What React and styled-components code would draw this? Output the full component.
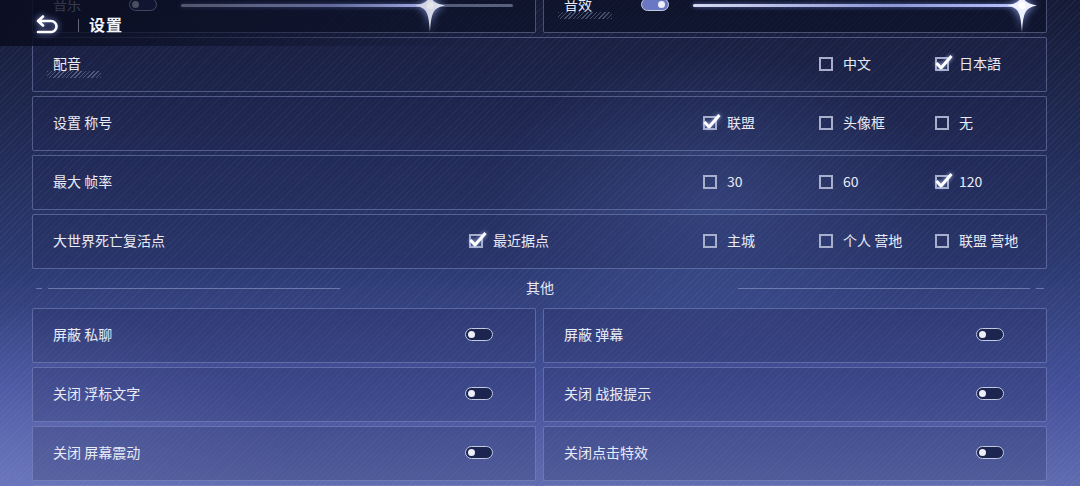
import React from "react";
import styled, { createGlobalStyle } from "styled-components";

const GlobalStyle = createGlobalStyle`
  body {
    margin: 0;
    background: #1a2142;
    font-family: "Noto Sans CJK SC", "Noto Sans", sans-serif;
  }
`;

const hatch = `repeating-linear-gradient(
  135deg,
  rgba(160, 175, 225, 0.07) 0px,
  rgba(160, 175, 225, 0.07) 1px,
  transparent 1px,
  transparent 4px
)`;

const Page = styled.div`
  position: relative;
  width: 1080px;
  height: 486px;
  overflow: hidden;
  background:
    ${hatch},
    radial-gradient(ellipse 320px 220px at 66% 42%, rgba(95, 120, 200, 0.32), transparent 70%),
    radial-gradient(ellipse 420px 260px at 0% 100%, rgba(120, 130, 200, 0.45), transparent 70%),
    linear-gradient(180deg, #151b36 0%, #1f2850 25%, #2c3a72 55%, #44519a 80%, #5f6cb0 100%);
`;

const Header = styled.header`
  position: absolute;
  top: 0;
  left: 0;
  width: 480px;
  height: 46px;
  display: flex;
  align-items: center;
  padding: 4px 0 0 35px;
  box-sizing: border-box;
  background: linear-gradient(90deg, rgba(10, 13, 32, 0.9) 0%, rgba(12, 16, 38, 0.6) 45%, transparent 100%);
  z-index: 2;
`;

const BackIcon = styled.svg`
  width: 26px;
  height: 20px;
  filter: drop-shadow(0 0 3px rgba(150, 170, 255, 0.9));
`;

const HeaderBar = styled.span`
  width: 1px;
  height: 13px;
  margin: 0 10px 0 17px;
  background: rgba(200, 210, 240, 0.45);
`;

const Title = styled.h1`
  margin: 0 0 2px;
  font-size: 16px;
  line-height: 20px;
  font-weight: 700;
  color: #f4f5fa;
  letter-spacing: 1px;
`;

const Content = styled.main`
  display: flex;
  flex-direction: column;
  gap: 4px;
  margin-top: -22px;
  padding: 0 33px 0 32px;
`;

const Pair = styled.div`
  display: grid;
  grid-template-columns: 1fr 1fr;
  column-gap: 7px;
  row-gap: 4px;
`;

const Panel = styled.div`
  height: 55px;
  box-sizing: border-box;
  display: flex;
  align-items: center;
  padding: 0 ${(p) => p.$padRight || 42}px 4px 20px;
  border: 1px solid rgba(150, 165, 215, 0.42);
  border-radius: 2px;
  background: ${(p) => (p.$dark ? "rgba(12, 16, 38, 0.62)" : "rgba(30, 38, 82, 0.22)")};
`;

const Label = styled.span`
  position: relative;
  flex: ${(p) => (p.$width ? `0 0 ${p.$width}px` : "1")};
  font-size: 14px;
  line-height: 20px;
  color: #e8ebf5;
  white-space: nowrap;

  &::after {
    content: "";
    display: ${(p) => (p.$hatched ? "block" : "none")};
    position: absolute;
    left: -6px;
    top: 18px;
    width: 54px;
    height: 7px;
    background: repeating-linear-gradient(
      135deg,
      rgba(170, 180, 220, 0.35) 0px,
      rgba(170, 180, 220, 0.35) 1px,
      transparent 1px,
      transparent 3px
    );
  }
`;

const Options = styled.div`
  display: grid;
  grid-template-columns: 117px 117px 116px 116px 100px;
  align-items: center;
  margin-right: -31px;
`;

const Option = styled.label`
  grid-column: ${(p) => p.$col};
  display: flex;
  align-items: center;
  gap: 10px;
  font-size: 14px;
  line-height: 20px;
  color: #e8ebf5;
  white-space: nowrap;
`;

const Box = styled.span`
  position: relative;
  width: 14px;
  height: 14px;
  margin-top: 2px;
  box-sizing: border-box;
  border: 2px solid #a7afcd;
  flex: 0 0 auto;
`;

const Tick = styled.svg`
  position: absolute;
  left: -3px;
  top: -5px;
  width: 19px;
  height: 17px;
  filter: drop-shadow(0 0 2px rgba(180, 195, 255, 0.95));
`;

const Checkbox = ({ checked, label, col }) => (
  <Option $col={col}>
    <Box>
      {checked && (
        <Tick viewBox="0 0 19 17">
          <path d="M2.5 9 L7 14 L17.5 2" fill="none" stroke="#ffffff" strokeWidth="3" strokeLinejoin="round" />
        </Tick>
      )}
    </Box>
    {label}
  </Option>
);

const Switch = styled.span`
  position: relative;
  width: 28px;
  height: 13px;
  margin-top: 2px;
  box-sizing: border-box;
  border: 1.5px solid #c3c9e0;
  border-radius: 7px;
  background: ${(p) => (p.$on ? "#6a78c4" : "#1c2450")};
  flex: 0 0 auto;

  &::after {
    content: "";
    position: absolute;
    top: 1.5px;
    left: ${(p) => (p.$on ? "16px" : "2px")};
    width: 7px;
    height: 7px;
    border-radius: 50%;
    background: #eceef8;
  }
`;

const Track = styled.div`
  position: relative;
  flex: 1;
  height: 3px;
  margin: 4px 0 0 24px;
  border-radius: 2px;
  background: rgba(150, 158, 190, 0.55);
`;

const Fill = styled.div`
  height: 100%;
  border-radius: 2px;
  background: linear-gradient(90deg, #d5d9ef 0%, #8c97d6 60%, #b8c2ff 100%);
  box-shadow: 0 0 4px rgba(140, 160, 255, 0.6);
`;

const Thumb = styled.svg`
  position: absolute;
  top: -14px;
  width: 34px;
  height: 44px;
  margin-left: -17px;
  filter: drop-shadow(0 0 4px rgba(160, 180, 255, 0.95));
`;

const Slider = ({ value }) => (
  <Track>
    <Fill style={{ width: `${value}%` }} />
    <Thumb viewBox="0 0 34 44" style={{ left: `${value}%` }}>
      <path
        d="M17 2 C18 10 20 13 32 15.5 C20 18 18.5 22 17 42 C15.5 22 14 18 2 15.5 C14 13 16 10 17 2 Z"
        fill="#eef1ff"
      />
      <circle cx="17" cy="15.5" r="3.5" fill="#ffffff" />
    </Thumb>
  </Track>
);

const Divider = styled.div`
  height: 31px;
  display: grid;
  grid-template-columns: 1fr auto 1fr;
  align-items: center;
  padding: 0 3px 0 4px;
`;

const DividerSide = styled.div`
  display: flex;
  align-items: center;
  gap: 6px;
  justify-content: ${(p) => (p.$end ? "flex-end" : "flex-start")};
`;

const Dash = styled.span`
  width: ${(p) => p.$w}px;
  height: 1px;
  background: rgba(150, 165, 215, 0.55);
`;

const DividerText = styled.span`
  font-size: 14px;
  line-height: 20px;
  margin-bottom: 4px;
  color: #e3e6f2;
`;

const audio = [
  { label: "音乐", on: false, value: 75 },
  { label: "音效", on: true, value: 98, hatched: true },
];

const choices = [
  {
    label: "配音",
    hatched: true,
    options: [
      { label: "中文", col: 4 },
      { label: "日本語", col: 5, checked: true },
    ],
  },
  {
    label: "设置 称号",
    options: [
      { label: "联盟", col: 3, checked: true },
      { label: "头像框", col: 4 },
      { label: "无", col: 5 },
    ],
  },
  {
    label: "最大 帧率",
    options: [
      { label: "30", col: 3 },
      { label: "60", col: 4 },
      { label: "120", col: 5, checked: true },
    ],
  },
  {
    label: "大世界死亡复活点",
    options: [
      { label: "最近据点", col: 1, checked: true },
      { label: "主城", col: 3 },
      { label: "个人 营地", col: 4 },
      { label: "联盟 营地", col: 5 },
    ],
  },
];

const toggles = [
  "屏蔽 私聊",
  "屏蔽 弹幕",
  "关闭 浮标文字",
  "关闭 战报提示",
  "关闭 屏幕震动",
  "关闭点击特效",
  "关闭 自动战斗",
  "关闭 战斗加速",
];

export default function App() {
  return (
    <Page>
      <GlobalStyle />
      <Header>
        <BackIcon viewBox="0 0 26 20">
          <path
            d="M3 6 H16 A5.5 5.5 0 0 1 16 17 H3 M8 1.5 L3 6 L8 10.5"
            fill="none"
            stroke="#ffffff"
            strokeWidth="2.6"
            strokeLinecap="round"
            strokeLinejoin="round"
          />
        </BackIcon>
        <HeaderBar />
        <Title>设置</Title>
      </Header>

      <Content>
        <Pair>
          {audio.map((a, i) => (
            <Panel key={a.label} $dark $padRight={i === 0 ? 22 : 17}>
              <Label $width={i === 0 ? 76 : 77} $hatched={a.hatched}>
                {a.label}
              </Label>
              <Switch $on={a.on} />
              <Slider value={a.value} />
            </Panel>
          ))}
        </Pair>

        {choices.map((c) => (
          <Panel key={c.label} $padRight={0}>
            <Label $hatched={c.hatched}>{c.label}</Label>
            <Options>
              {c.options.map((o) => (
                <Checkbox key={o.label} {...o} />
              ))}
            </Options>
          </Panel>
        ))}

        <Divider>
          <DividerSide>
            <Dash $w={6} />
            <Dash $w={292} />
          </DividerSide>
          <DividerText>其他</DividerText>
          <DividerSide $end>
            <Dash $w={292} />
            <Dash $w={8} />
          </DividerSide>
        </Divider>

        <Pair>
          {toggles.map((t) => (
            <Panel key={t}>
              <Label>{t}</Label>
              <Switch />
            </Panel>
          ))}
        </Pair>
      </Content>
    </Page>
  );
}
